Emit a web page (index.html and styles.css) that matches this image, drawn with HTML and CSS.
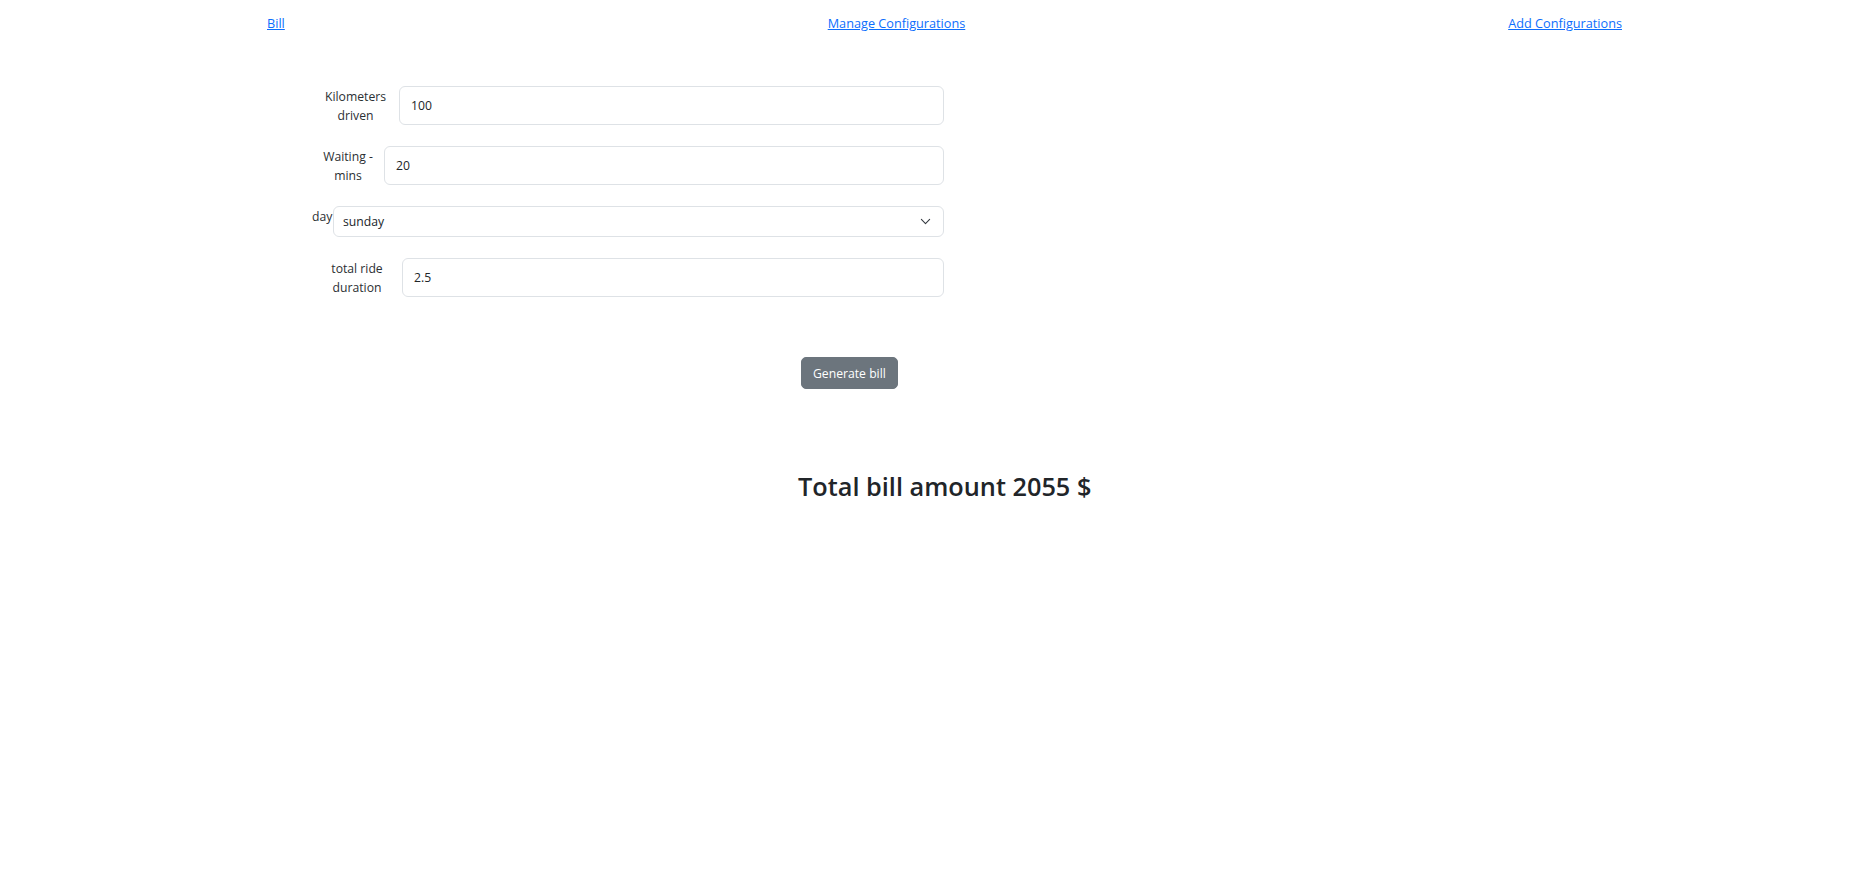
FILE: index.html
```html
<!DOCTYPE html>
<html lang="en">
<head>
<meta charset="utf-8">
<title>Bill</title>
<link rel="stylesheet" href="styles.css">
</head>
<body>
<nav class="topnav">
  <a class="nav-link" href="#">Bill</a>
  <a class="nav-link" href="#">Manage Configurations</a>
  <a class="nav-link" href="#">Add Configurations</a>
</nav>
<main class="page">
  <form class="bill-form">
    <div class="field">
      <label class="field-label label-km" for="km">Kilometers driven</label>
      <input class="field-input" id="km" type="text" value="100">
    </div>
    <div class="field">
      <label class="field-label label-wait" for="wait">Waiting - mins</label>
      <input class="field-input" id="wait" type="text" value="20">
    </div>
    <div class="field">
      <label class="field-label label-day" for="day">day</label>
      <div class="select-wrap">
        <select class="field-select" id="day">
          <option>sunday</option>
        </select>
        <svg class="chevron" viewBox="0 0 16 16" width="11" height="11" aria-hidden="true"><path d="M2 5l6 6 6-6" fill="none" stroke="#343a40" stroke-width="1.6" stroke-linecap="round" stroke-linejoin="round"/></svg>
      </div>
    </div>
    <div class="field">
      <label class="field-label label-dur" for="dur">total ride duration</label>
      <input class="field-input" id="dur" type="text" value="2.5">
    </div>
  </form>
  <div class="actions">
    <button class="btn-generate" type="button">Generate bill</button>
  </div>
  <h3 class="total">Total bill amount 2055 $</h3>
</main>
</body>
</html>
```

FILE: styles.css
```css
* { box-sizing: border-box; }

body {
  margin: 0;
  font-family: "Open Sans", "Noto Sans", "Liberation Sans", sans-serif;
  font-size: 12.2px;
  color: #212529;
  background: #fff;
}

.topnav {
  display: flex;
  justify-content: space-between;
  padding: 14px 254px 0 267px;
  line-height: 19px;
  font-size: 12.7px;
}

.nav-link {
  color: #0d6efd;
  text-decoration: underline;
}

.page {
  padding-left: 312px;
}

.bill-form {
  width: 632px;
  margin-top: 53px;
  display: flex;
  flex-direction: column;
  gap: 21px;
}

.field {
  display: flex;
  align-items: flex-start;
}

.field-label {
  flex-shrink: 0;
  text-align: center;
  line-height: 19px;
  padding-top: 1px;
  color: #2b2f33;
}

.label-km { width: 87px; }
.label-wait { width: 72px; }
.label-day { width: 21px; text-align: left; }
.label-dur { width: 90px; }

.field-input {
  flex: 1;
  min-width: 0;
  height: 39px;
  padding: 0 11px;
  border: 1px solid #dee2e6;
  border-radius: 6px;
  font: inherit;
  color: #212529;
  background: #fff;
}

.select-wrap {
  flex: 1;
  position: relative;
}

.field-select {
  display: block;
  width: 100%;
  height: 31px;
  padding: 0 30px 0 9px;
  border: 1px solid #dee2e6;
  border-radius: 6px;
  font: inherit;
  color: #212529;
  background: #fff;
  appearance: none;
  -webkit-appearance: none;
}

.chevron {
  position: absolute;
  right: 13px;
  top: 10px;
  pointer-events: none;
}

.actions {
  margin-top: 60px;
  padding-left: 489px;
}

.btn-generate {
  height: 32px;
  padding: 0 11px;
  border: 1px solid #6c757d;
  border-radius: 5px;
  background: #6c757d;
  color: #fff;
  font: inherit;
}

.total {
  margin: 82px 0 0 486px;
  font-size: 25.3px;
  font-weight: 600;
  line-height: 1.2;
  color: #212529;
}
```
